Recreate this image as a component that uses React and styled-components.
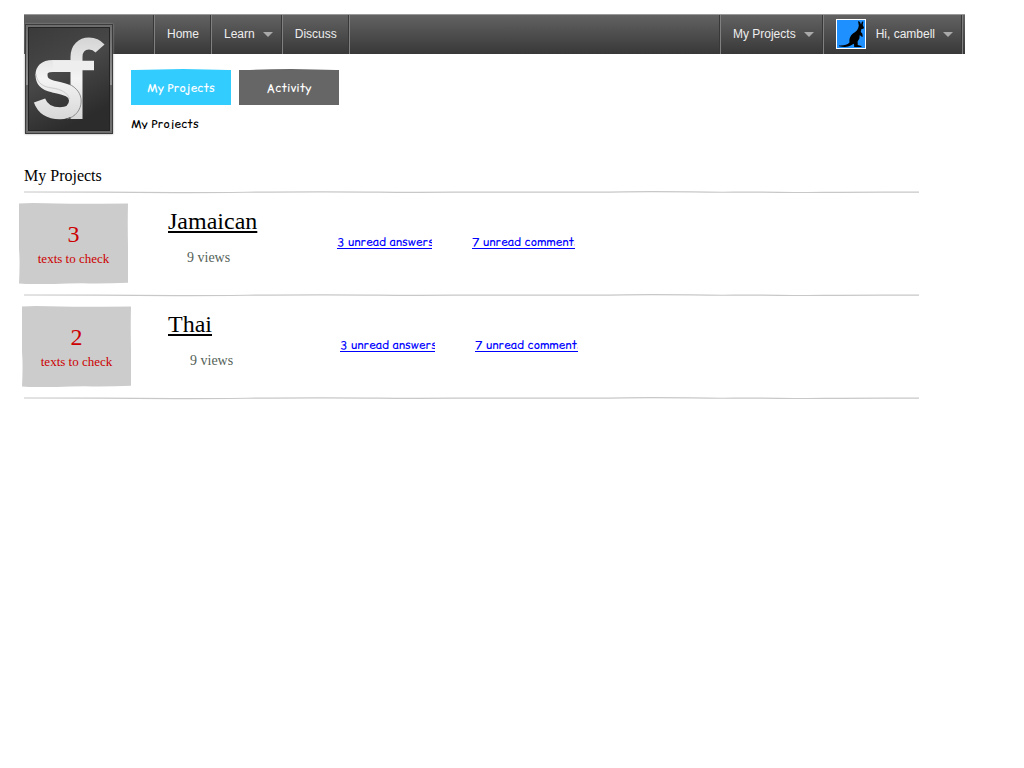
import React from "react";
import styled, { createGlobalStyle } from "styled-components";

const GlobalStyle = createGlobalStyle`
  *, *::before, *::after { box-sizing: border-box; }
  body {
    margin: 0;
    background: #fff;
    color: #000;
    font-family: "Liberation Serif", "Times New Roman", serif;
  }
  h1, h2, h3, p { margin: 0; font-weight: normal; }
  button { border: 0; background: none; padding: 0; cursor: pointer; }
`;

const comic = `"Comic Sans MS", "Comic Relief", "Comic Neue", "Noto Sans", sans-serif`;

const Page = styled.div`
  padding: 14px 24px;
`;

const Header = styled.header`
  position: relative;
  display: flex;
  justify-content: space-between;
  max-width: 941px;
  height: 40px;
  padding: 0 2px 0 130px;
  border-top: 1px solid #999;
  background: linear-gradient(#626262, #383838);
`;

const LogoLink = styled.a`
  position: absolute;
  top: 9px;
  left: 1px;
  display: block;
  height: 110px;
  box-shadow: 0 0 2px #999;
`;

const NavGroup = styled.nav`
  display: flex;
  border-right: 1px solid #808080;
  box-shadow: inset -1px 0 #383838;
`;

const NavItem = styled.button`
  display: flex;
  align-items: center;
  padding: 0 ${(p) => (p.$menu ? 9 : 12)}px 2px 12px;
  border-left: 1px solid #808080;
  box-shadow: -1px 0 #383838;
  color: #eee;
  font: 12px/16px "Liberation Sans", Arial, sans-serif;
  white-space: nowrap;
`;

const Caret = styled.span`
  width: 0;
  margin: 2px 0 0 8px;
  border: 5px solid transparent;
  border-top-color: #aaa;
  border-bottom-width: 0;
`;

const Avatar = styled.svg`
  width: 30px;
  height: 30px;
  margin-right: 10px;
  border: 1px solid #fff;
  background: #1e90ff;
`;

const SubHeader = styled.div`
  padding: 16px 0 0 107px;
`;

const Tabs = styled.nav`
  display: flex;
  gap: 8px;
`;

const Tab = styled.button`
  position: relative;
  width: 100px;
  height: 35px;
  background: ${(p) => (p.$active ? "#33ccff" : "#666")};
  color: #fff;
  font: 12px/35px ${comic};
`;

const TabEdge = styled.svg`
  position: absolute;
  left: 0;
  top: -1px;
  width: 100%;
  height: 1px;
`;

const Crumb = styled.h1`
  margin-top: 10px;
  height: 14px;
  overflow: hidden;
  font: 12px/18px ${comic};
`;

const Projects = styled.main`
  max-width: 895px;
  margin-top: 37px;
`;

const SectionTitle = styled.h2`
  font-size: 16px;
  line-height: 20px;
  margin-bottom: 5px;
`;

const RuleSvg = styled.svg`
  display: block;
  width: 100%;
  height: 4px;
`;

const Row = styled.article`
  display: grid;
  grid-template-columns: 109px 209px 95px 103px;
  padding: 8px 0 10px;
  margin-left: ${(p) => (p.$first ? -5 : -2)}px;
`;

const CheckBox = styled.div`
  position: relative;
  height: 81px;
  padding-top: 17px;
  color: #c00;
  text-align: center;
`;

const BoxShape = styled.svg`
  position: absolute;
  inset: 0;
  width: 100%;
  height: 100%;
`;

const Count = styled.p`
  position: relative;
  font-size: 24px;
  line-height: 28px;
`;

const CountLabel = styled.p`
  position: relative;
  font-size: 13px;
  line-height: 22px;
`;

const Name = styled.h3`
  padding: 4px 0 0 ${(p) => (p.$first ? 40 : 37)}px;
  font-size: 24px;
  line-height: 28px;
  a { color: #000; }
`;

const Views = styled.p`
  margin-top: 15px;
  padding-left: 59px;
  color: #555f58;
  font-size: 14px;
  line-height: 16px;
`;

const Unread = styled.a`
  margin-top: 29px;
  margin-left: ${(p) => (p.$last ? 40 : 0)}px;
  width: ${(p) => (p.$last ? 103 : 95)}px;
  height: 20px;
  overflow: hidden;
  color: #00f;
  font: 12px/20px ${comic};
  text-underline-offset: 2px;
  white-space: nowrap;
`;

function Rule() {
  return (
    <RuleSvg viewBox="0 0 895 4" preserveAspectRatio="none" aria-hidden="true">
      <path
        d="M0 1 C60 1 90 1.3 150 1.6 S230 .7 300 .8 S350 1.6 430 1.2 S540 1.5 600 .8 S670 1.6 710 1.2 S760 1.8 800 1.4 S850 1 895 1.2"
        fill="none"
        stroke="#c8c8c8"
        strokeWidth="1.2"
      />
    </RuleSvg>
  );
}

function Logo() {
  return (
    <svg width="88" height="110" viewBox="0 0 88 110" role="img" aria-label="sf">
      <defs>
        <linearGradient id="frame" x2="0" y2="1">
          <stop offset="0" stopColor="#6c6c6c" />
          <stop offset="0.55" stopColor="#929292" />
          <stop offset="0.56" stopColor="#606060" />
          <stop offset="1" stopColor="#707070" />
        </linearGradient>
        <linearGradient id="plate" x2="0.4" y2="1">
          <stop offset="0" stopColor="#3a3a3a" />
          <stop offset="0.5" stopColor="#484848" />
          <stop offset="1" stopColor="#2c2c2c" />
        </linearGradient>
        <linearGradient id="metal" gradientUnits="userSpaceOnUse" x1="0" y1="14" x2="0" y2="95">
          <stop offset="0" stopColor="#d5d5d5" />
          <stop offset="0.5" stopColor="#f4f4f4" />
          <stop offset="1" stopColor="#d8d8d8" />
        </linearGradient>
      </defs>
      <rect x="0.5" y="0.5" width="87" height="109" fill="url(#frame)" stroke="#3c3c3c" />
      <rect x="3.5" y="3.5" width="81" height="103" fill="url(#plate)" stroke="#242424" />
      <g fill="none" stroke="url(#metal)">
        <path d="M51.5 95 V33 C51.5 24 57 19.5 64 19.5 C69 19.5 72 21 75 24.5" strokeWidth="12" />
        <path
          d="M51 42 H28 C19 42 16.5 46 16.5 51 C16.5 58 21 61 28 62.5 C40 65 50 67 50 76.5 C50 85 43 89.3 35 89.3 C25 89.3 18 86 14.5 76.5"
          strokeWidth="12"
        />
        <path d="M28 41.5 L69 41.6" stroke="#eee" strokeWidth="9.5" />
      </g>
      <path d="M44 60 C52 64 56.2 70 56.2 77 C56.2 86 50 93 42 95" fill="none" stroke="#777" strokeWidth="0.8" />
      <path d="M11 50 C12 59 18 63 27 64 C36 65 43 69 44.5 75" fill="none" stroke="#ccc" strokeWidth="1" />
    </svg>
  );
}

function Kangaroo() {
  return (
    <Avatar viewBox="0 0 28 28" aria-hidden="true">
      <path d="M21 1 L23 2 L24 4.4 L25 1.4 L26.3 1.8 L25.7 5 L27 7.7 L26.4 8.8 L24.4 9 L23.8 12 L25.3 13.4 L25.8 16.7 L24.7 16.8 L22.7 15 L22.4 18.5 L20.6 21.5 L20.8 25 L24.5 26 L24.5 27 L17.2 27 L17 23.8 L15.4 24.5 C12 27.4 7 27.2 2 26.3 V25.4 C7 25.6 10 25 12.5 22.5 C12 17.5 14 14.5 17.5 12.5 C20.5 10.5 21.4 8 21.8 5.4 Z" fill="#000" />
    </Avatar>
  );
}

function SectionTab({ active, children }) {
  return (
    <Tab type="button" $active={active}>
      <TabEdge viewBox="0 0 100 1" preserveAspectRatio="none" aria-hidden="true">
        <path d="M4 1 Q28 0.4 52 0 Q76 0.4 97 1 Z" fill={active ? "#33ccff" : "#666"} />
      </TabEdge>
      {children}
    </Tab>
  );
}

function Project({ first, name, texts }) {
  return (
    <>
      <Row $first={first}>
        <CheckBox>
          <BoxShape viewBox="0 0 109 81" preserveAspectRatio="none" aria-hidden="true">
            <path d="M0 .4 Q12 -.3 27 .3 T60 .7 T109 .4 Q108.5 20 109 43 T109 79.8 Q88 80.6 70 80.4 T35 81 T0 80.6 Q1 60 .2 49 T0 .4Z" fill="#ccc" />
          </BoxShape>
          <Count>{texts}</Count>
          <CountLabel>texts to check</CountLabel>
        </CheckBox>
        <div>
          <Name $first={first}>
            <a href="#project">{name}</a>
          </Name>
          <Views>9 views</Views>
        </div>
        <Unread href="#answers">3 unread answers</Unread>
        <Unread href="#comments" $last>
          7 unread comments
        </Unread>
      </Row>
      <Rule />
    </>
  );
}

export default function App() {
  return (
    <Page>
      <GlobalStyle />
      <Header>
        <LogoLink href="#home">
          <Logo />
        </LogoLink>
        <NavGroup>
          <NavItem type="button">Home</NavItem>
          <NavItem type="button" $menu>
            Learn
            <Caret />
          </NavItem>
          <NavItem type="button">Discuss</NavItem>
        </NavGroup>
        <NavGroup>
          <NavItem type="button" $menu>
            My Projects
            <Caret />
          </NavItem>
          <NavItem type="button" $menu>
            <Kangaroo />
            Hi, cambell
            <Caret />
          </NavItem>
        </NavGroup>
      </Header>
      <SubHeader>
        <Tabs>
          <SectionTab active>My Projects</SectionTab>
          <SectionTab>Activity</SectionTab>
        </Tabs>
        <Crumb>My Projects</Crumb>
      </SubHeader>
      <Projects>
        <SectionTitle>My Projects</SectionTitle>
        <Rule />
        <Project first name="Jamaican" texts={3} />
        <Project name="Thai" texts={2} />
      </Projects>
    </Page>
  );
}
